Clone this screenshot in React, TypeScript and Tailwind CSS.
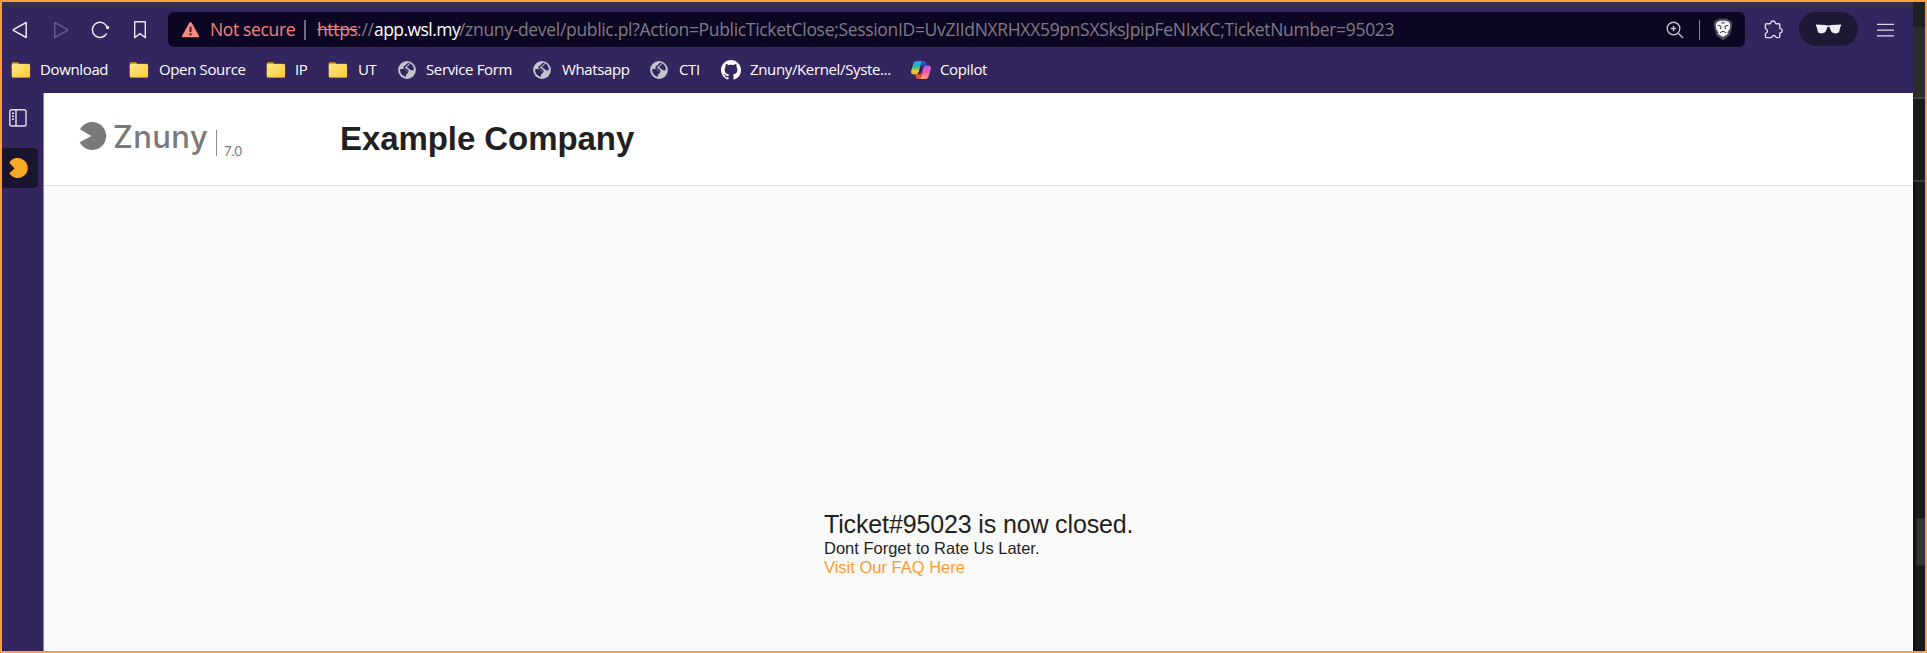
import type { ReactNode } from "react";

function Folder() {
  return (
    <svg className="h-[18px] w-5 shrink-0" viewBox="0 0 20 18">
      <defs>
        <linearGradient id="folderFill" x1="0" y1="0" x2="1" y2="1">
          <stop offset="0" stopColor="#ffe787" />
          <stop offset="1" stopColor="#fbc934" />
        </linearGradient>
      </defs>
      <path d="M.8 3c0-1.200.6-1.800 1.600-1.800h4.600l1.500 1.500h8.700c1 0 1.600.6 1.600 1.600v2H.8z" fill="#e0a010" />
      <rect x=".7" y="3" width="18.400" height="13.600" rx="1.500" fill="url(#folderFill)" />
      <path d="M1.200 16.500h17.400" stroke="#c08c16" strokeWidth=".9" />
    </svg>
  );
}

function Globe() {
  return (
    <svg className="size-[18px] shrink-0" viewBox="0 0 18 18">
      <circle cx="9" cy="9" r="8.900" fill="#c3c3cd" />
      <path
        d="M11.200 2.300C8.500 2.700 9.200 4.600 7.400 5.200 5.700 5.800 5.600 7.600 7.400 8c2 .4 1.200 2 3.200 2.200"
        fill="none"
        stroke="#33255e"
        strokeWidth="1.500"
      />
      <path
        d="M11.600 2.200c2.700 1 4.400 3.500 4.300 6.600-.9.700-2.100.8-3.200.2-.9-.5-.8-1.500-2-1.600-1-.1-1.500-.8-1.300-1.700.3-1 1.600-.7 2-1.600.3-.7-.2-1.200.2-1.900zM2.100 8.300c1.300-.4 3.300-.5 4.600.1 1.200.6 1 1.600 2.300 1.800 1.100.2 1.300 1.100.8 1.900-.4.700-1.500.6-1.700 1.500-.2.800.2 1.400-.3 2.200C4.300 15 1.900 12 2.100 8.300z"
        fill="#33255e"
      />
    </svg>
  );
}

function Github() {
  return (
    <svg className="size-5 shrink-0" viewBox="0 0 16 16" fill="#fff">
      <path d="M8 0C3.580 0 0 3.580 0 8c0 3.540 2.290 6.530 5.470 7.590.4.070.55-.17.55-.38 0-.19-.01-.82-.01-1.490-2.010.37-2.530-.49-2.690-.94-.09-.23-.48-.94-.82-1.130-.28-.15-.68-.52-.01-.53.63-.01 1.080.58 1.230.82.72 1.210 1.870.87 2.330.66.070-.52.28-.87.51-1.070-1.780-.2-3.640-.89-3.640-3.950 0-.87.31-1.590.82-2.150-.08-.2-.36-1.020.08-2.120 0 0 .67-.21 2.200.82.64-.18 1.320-.27 2-.27s1.360.09 2 .27c1.530-1.040 2.200-.82 2.200-.82.44 1.100.16 1.920.08 2.120.51.56.82 1.270.82 2.150 0 3.070-1.870 3.750-3.650 3.950.29.25.54.73.54 1.480 0 1.070-.01 1.930-.01 2.200 0 .21.15.46.55.38A8.010 8.010 0 0 0 16 8c0-4.420-3.580-8-8-8" />
    </svg>
  );
}

function Copilot() {
  return (
    <svg className="h-[18px] w-5 shrink-0" viewBox="0 0 20 18">
      <defs>
        <linearGradient id="copLeft" x1="0" y1="0" x2="0" y2="1">
          <stop offset="0" stopColor="#18a5f5" />
          <stop offset=".45" stopColor="#35b99c" />
          <stop offset=".75" stopColor="#f1ca2c" />
          <stop offset="1" stopColor="#f0a52c" />
        </linearGradient>
        <linearGradient id="copRight" x1="0" y1="0" x2="0" y2="1">
          <stop offset="0" stopColor="#b05df0" />
          <stop offset=".5" stopColor="#ee5fa6" />
          <stop offset="1" stopColor="#ffa27a" />
        </linearGradient>
      </defs>
      <path d="M10.500 0h2.600c1 0 1.500.6 1.800 1.500L15.800 4.600h-3.300c-1.500 0-2.100.9-2.500 2.200z" fill="#1d53dc" />
      <path d="M9.500 18H6.900c-1 0-1.500-.6-1.800-1.500l-.9-3.100h3.300c1.500 0 2.100-.9 2.500-2.200z" fill="#f4552c" />
      <path d="M5.600 0h6.300c-1 .3-1.400 1-1.700 2L7.600 11.200c-.4 1.400-1 2.200-2.500 2.200H2.500C.5 13.400-.4 12 .2 9.800l2.200-7.300C2.900.9 3.900 0 5.600 0z" fill="url(#copLeft)" />
      <path d="M14.400 18H8.100c1-.3 1.400-1 1.700-2l2.600-9.200c.4-1.400 1-2.200 2.500-2.200h2.600c2 0 2.900 1.400 2.300 3.600l-2.200 7.300c-.5 1.600-1.500 2.500-3.200 2.500z" fill="url(#copRight)" />
    </svg>
  );
}

function LogoMark() {
  return (
    <svg className="mt-[29px] size-7" viewBox="0 0 28 28" fill="#7a7a7a">
      <path d="M.9 7.300A14 14 0 1 1 .7 20.200L12.300 14z" />
    </svg>
  );
}

function PanelMark() {
  return (
    <svg className="ml-[7px] h-5 w-[19px]" viewBox="0 0 19 20" fill="#f9a825">
      <path d="M.3 4.700A10 10 0 1 1 .3 15.300L5.600 10.600z" />
    </svg>
  );
}

function Bookmark({ icon, gap, width, children }: { icon: ReactNode; gap: string; width: string; children: string }) {
  return (
    <div className={`flex shrink-0 items-center ${gap} ${width}`}>
      {icon}
      <span className="mb-[2px] text-[15px] leading-5 tracking-[-0.36px] whitespace-nowrap text-white">{children}</span>
    </div>
  );
}

function Toolbar() {
  return (
    <div className="flex h-[40px] items-start pt-[5px]">
      <div className="flex h-[35px] w-[166px] shrink-0 items-center pl-[10px]">
        <svg className="h-5 w-[16px]" viewBox="0 0 16 20" fill="none" stroke="#e9e7f0" strokeWidth="1.500" strokeLinejoin="round">
          <path d="M14.200 2.500v15L1.700 10.700a.8.800 0 0 1 0-1.400z" />
        </svg>
        <svg className="ml-[25px] h-5 w-[16px]" viewBox="0 0 16 20" fill="none" stroke="#665a8b" strokeWidth="1.500" strokeLinejoin="round">
          <path d="M1.800 2.500v15l12.500-6.800a.8.800 0 0 0 0-1.400z" />
        </svg>
        <svg className="ml-[21px] size-5" viewBox="0 0 20 20" fill="none" stroke="#e9e7f0" strokeWidth="1.500">
          <path d="M16.700 13.400A7.600 7.600 0 1 1 16.300 5.600L17.300 8" />
          <circle cx="17.600" cy="7.500" r="1.700" fill="#e9e7f0" stroke="none" />
        </svg>
        <svg className="ml-[22px] h-5 w-[16px]" viewBox="0 0 16 20" fill="none" stroke="#e9e7f0" strokeWidth="1.400" strokeLinejoin="round">
          <path d="M2.700 1.700h10.600v16L8 13.600l-5.300 4.100z" />
        </svg>
      </div>
      <div className="flex h-[35px] w-[1577px] shrink-0 items-center rounded-[6px] bg-[#0d0622] text-[17.500px] leading-6 whitespace-nowrap">
        <svg className="ml-[13px] h-[18px] w-[19px] shrink-0" viewBox="0 0 19 18">
          <path d="M8.200 2q1.300-1.900 2.600 0l7 12.400q.8 1.900-1.300 1.900h-14Q.4 16.300 1.200 14.400z" fill="#f28b82" />
          <path d="M9.500 5.700v5.200M9.500 12.200v2.100" stroke="#3b1c38" strokeWidth="2" />
        </svg>
        <span className="mb-[2px] ml-[10px] w-[94px] shrink-0 tracking-[-0.36px] text-[#f0857f]">Not secure</span>
        <span className="h-5 w-[2px] shrink-0 bg-[#6f6a7c]" />
        <span className="mb-[2px] ml-[11px] w-[40px] shrink-0 tracking-[-0.36px] text-[#f0857f] line-through decoration-1">https</span>
        <span className="mb-[2px] w-[17px] shrink-0 tracking-[-0.2px] text-[#7f7b8a]">://</span>
        <span className="mb-[2px] w-[85px] shrink-0 tracking-[-0.55px] text-white">app.wsl.my</span>
        <span className="mb-[2px] w-[1207px] shrink-0 tracking-[-0.32px] text-[#7f7b87]">
          /znuny-devel/public.pl?Action=PublicTicketClose;SessionID=UvZIIdNXRHXX59pnSXSksJpipFeNIxKC;TicketNumber=95023
        </span>
        <svg className="size-[18px] shrink-0" viewBox="0 0 18 18" fill="none" stroke="#c6c3d0" strokeWidth="1.400">
          <circle cx="7.500" cy="7.500" r="6.300" />
          <path d="M12 12l5 5M4.700 7.500h5.600M7.500 4.700v5.600" />
        </svg>
        <span className="ml-[15px] h-5 w-px shrink-0 bg-[#8b8796]" />
        <svg className="ml-[13px] h-[23px] w-5 shrink-0" viewBox="0 0 20 23">
          <path d="M6 .5h8l2 1.800 2.300.2L19.500 6l-.8 2 .3 1-2.300 8.300L10 22.500 3.300 17.300 1 9l.3-1-.8-2 1.200-3.500 2.300-.2z" fill="#4b4a5c" />
          <path d="M7 2.800h6l3 1.200 1.300 2.800-.6 4.200-2.200 3.200.3 1.800L10 19l-4.800-3 .3-1.800L3.300 11l-.6-4.200L4 4z" fill="#f6f5f8" />
          <path d="M4.700 7.400l3.500.8-.8 3M15.300 7.400l-3.500.8.8 3M7 14.700L10 13.200l3 1.500M8.200 4.600L10 5.200l1.800-.6" fill="none" stroke="#353345" strokeWidth="1" />
        </svg>
      </div>
      <div className="flex h-[35px] w-[168px] shrink-0 items-center">
        <svg className="ml-[18px] size-5 shrink-0" viewBox="0 0 20 20" fill="none" stroke="#dedbe7" strokeWidth="1.400" strokeLinejoin="round">
          <path d="M3.400 3.700h3.500c.5 0 .8-.4.900-.9a2.300 2.300 0 0 1 4.500 0c.1.500.4.900.9.900h2.600c.6 0 1 .4 1 1v3c0 .5.300.8.800.9a2.200 2.200 0 0 1 0 4.200c-.5.100-.8.400-.8.900v2.900c0 .6-.4 1-1 1h-2c-.6 0-.9-.4-1.100-.9-.6-1.600-3-1.600-3.600 0-.2.500-.5.900-1.100.9H3.400c-.6 0-1-.4-1-1v-2.400c0-.6.4-.9.900-1.200 1.500-.8 1.500-3.100 0-3.900-.5-.3-.9-.6-.9-1.200V4.700c0-.6.4-1 1-1z" />
        </svg>
        <div className="mb-[1px] ml-[16px] flex h-[34px] w-[59px] shrink-0 items-center justify-center rounded-full bg-[#1e1834]">
          <svg className="h-[10px] w-[25px]" viewBox="0 0 25 10" fill="#eeecf2">
            <path d="M0 .6L9.500.9l2.200.5h1.600l2.200-.5L25 .6v1.700l-.8.600-.6 3.300c-.4 2.200-1.800 3.200-4.200 3.200-2.800 0-4-1-4.800-3.300L13.500 3h-2l-1.100 3.100C9.600 8.400 8.400 9.400 5.600 9.400 3.200 9.400 1.800 8.400 1.400 6.200L.8 2.900 0 2.300z" />
          </svg>
        </div>
        <svg className="ml-[19px] h-[14px] w-[17px] shrink-0" viewBox="0 0 17 14" stroke="#dedbe7" strokeWidth="1.300">
          <path d="M0 1.300h17M0 7.100h17M0 12.900h17" />
        </svg>
      </div>
    </div>
  );
}

function Bookmarks() {
  return (
    <div className="flex h-[46px] items-center pl-[9px]">
      <Bookmark icon={<Folder />} gap="gap-[9px]" width="w-[118px]">Download</Bookmark>
      <Bookmark icon={<Folder />} gap="gap-[10px]" width="w-[137px]">Open Source</Bookmark>
      <Bookmark icon={<Folder />} gap="gap-[9px]" width="w-[62px]">IP</Bookmark>
      <Bookmark icon={<Folder />} gap="gap-[10px]" width="w-[70px]">UT</Bookmark>
      <Bookmark icon={<Globe />} gap="gap-[10px]" width="w-[135px]">Service Form</Bookmark>
      <Bookmark icon={<Globe />} gap="gap-[11px]" width="w-[117px]">Whatsapp</Bookmark>
      <Bookmark icon={<Globe />} gap="gap-[11px]" width="w-[71px]">CTI</Bookmark>
      <Bookmark icon={<Github />} gap="gap-[9px]" width="w-[190px]">Znuny/Kernel/Syste...</Bookmark>
      <Bookmark icon={<Copilot />} gap="gap-[9px]" width="w-[90px]">Copilot</Bookmark>
    </div>
  );
}

function Sidebar() {
  return (
    <aside className="w-[41px] shrink-0">
      <svg className="mt-4 ml-[7px] size-[18px]" viewBox="0 0 18 18" fill="none" stroke="#e4e1ec" strokeWidth="1.400">
        <rect x=".8" y=".8" width="16.200" height="16.200" rx="1.800" />
        <path d="M7 1v16M3 4.300h2M3 7.300h2M3 10.300h2" />
      </svg>
      <div className="mt-[21px] flex h-10 w-9 items-center rounded-r-[5px] bg-[#1a152f]">
        <PanelMark />
      </div>
    </aside>
  );
}

function Page() {
  return (
    <main className="flex min-w-0 flex-1 flex-col border-l border-[#8c84a3] bg-[#fafafa] font-['Liberation_Sans',Arial,sans-serif] text-[#231f20]">
      <header className="flex h-[93px] shrink-0 items-center border-b border-[#e2e2e2] bg-white">
        <div className="flex h-full w-[296px] shrink-0 items-start pl-[35px] text-[#7a7a7a]">
          <LogoMark />
          <span className="mt-[25px] ml-[6px] w-[98px] font-['Inter',sans-serif] text-[31px] leading-[38px] font-medium tracking-[0.4px]">Znuny</span>
          <span className="mt-[37px] ml-[5px] h-[26px] w-px bg-[#8a8a8a]" />
          <span className="mt-[48px] ml-[7px] font-['Lato',sans-serif] text-[13px] leading-5 tracking-[-0.1px]">7.0</span>
        </div>
        <h1 className="text-[33px] leading-10 font-bold tracking-[-0.07px] whitespace-nowrap">Example Company</h1>
      </header>
      <section className="mt-[324px] ml-[780px]">
        <h2 className="text-[25px] leading-[29px] tracking-[-0.14px]">Ticket#95023 is now closed.</h2>
        <p className="text-[16.500px] leading-[19px]">Dont Forget to Rate Us Later.</p>
        <a className="block text-[16.500px] leading-[19px] text-[#ff9b2e]">Visit Our FAQ Here</a>
      </section>
    </main>
  );
}

function DesktopEdge() {
  return (
    <div className="flex w-3 shrink-0 flex-col bg-[#1a1a1a]">
      <div className="h-[25px] shrink-0 rounded-br-[4px] bg-[#202020]" />
      <div className="h-[72px] shrink-0 border-b-2 border-[#424242] bg-[#2c2c2c]" />
      <div className="h-[83px] shrink-0 border-b-2 border-[#3c3c3c]" />
      <div className="flex flex-1 flex-col border-l-[3px] border-[#121212]">
        <div className="mt-[336px] h-[48px] border border-[#2b2b2b] bg-[#353535]" />
      </div>
    </div>
  );
}

export default function App() {
  return (
    <div className="flex h-[653px] w-[1927px] overflow-hidden border-2 border-[#ff9f3b] font-['Open_Sans','Noto_Sans',sans-serif]">
      <div className="flex w-[1911px] shrink-0 flex-col bg-[#33255e]">
        <div className="h-[5px] shrink-0 bg-[#353049]" />
        <Toolbar />
        <Bookmarks />
        <div className="flex flex-1">
          <Sidebar />
          <Page />
        </div>
      </div>
      <DesktopEdge />
    </div>
  );
}
